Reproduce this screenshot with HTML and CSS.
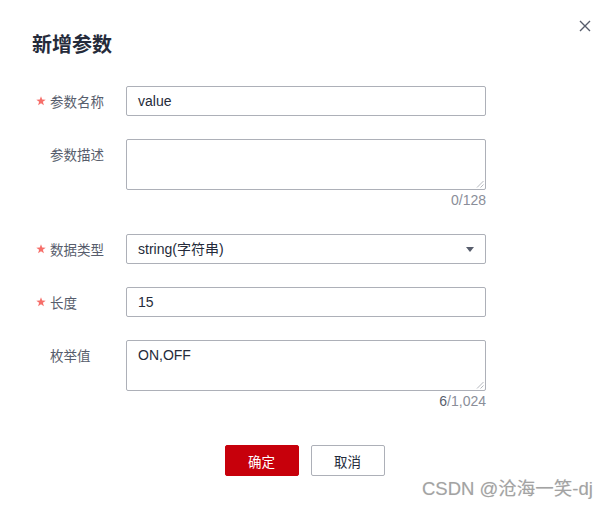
FILE: index.html
```html
<!DOCTYPE html>
<html lang="zh">
<head>
<meta charset="utf-8">
<link rel="stylesheet" href="styles.css">
</head>
<body>
<div class="dialog">
  <button class="close" aria-label="close">
    <svg width="12" height="12" viewBox="0 0 12 12"><path d="M1 1 L11 11 M11 1 L1 11" stroke="#575d6c" stroke-width="1.4" fill="none"/></svg>
  </button>
  <h1 class="title">新增参数</h1>
  <form class="form">
    <div class="item">
      <label class="label"><span class="star"><svg width="10" height="10" viewBox="0 0 10 10"><path d="M5 0.3 L6.2 3.6 L9.7 3.7 L6.9 5.8 L7.9 9.3 L5 7.2 L2.1 9.3 L3.1 5.8 L0.3 3.7 L3.8 3.6 Z" fill="#f66f6a"/></svg></span>参数名称</label>
      <div class="control"><div class="input">value</div></div>
    </div>
    <div class="item">
      <label class="label"><span class="star"></span>参数描述</label>
      <div class="control">
        <div class="ta-wrap">
          <textarea class="textarea"></textarea>
          <svg class="grip" width="8" height="8" viewBox="0 0 8 8"><path d="M7.5 1 L1 7.5 M7.5 4.5 L4.5 7.5" stroke="#b5b8be" stroke-width="1" fill="none"/></svg>
        </div>
        <div class="count">0/128</div>
      </div>
    </div>
    <div class="item">
      <label class="label"><span class="star"><svg width="10" height="10" viewBox="0 0 10 10"><path d="M5 0.3 L6.2 3.6 L9.7 3.7 L6.9 5.8 L7.9 9.3 L5 7.2 L2.1 9.3 L3.1 5.8 L0.3 3.7 L3.8 3.6 Z" fill="#f66f6a"/></svg></span>数据类型</label>
      <div class="control"><div class="input select">string(字符串)<span class="caret"></span></div></div>
    </div>
    <div class="item">
      <label class="label"><span class="star"><svg width="10" height="10" viewBox="0 0 10 10"><path d="M5 0.3 L6.2 3.6 L9.7 3.7 L6.9 5.8 L7.9 9.3 L5 7.2 L2.1 9.3 L3.1 5.8 L0.3 3.7 L3.8 3.6 Z" fill="#f66f6a"/></svg></span>长度</label>
      <div class="control"><div class="input">15</div></div>
    </div>
    <div class="item">
      <label class="label"><span class="star"></span>枚举值</label>
      <div class="control">
        <div class="ta-wrap">
          <textarea class="textarea">ON,OFF</textarea>
          <svg class="grip" width="8" height="8" viewBox="0 0 8 8"><path d="M7.5 1 L1 7.5 M7.5 4.5 L4.5 7.5" stroke="#b5b8be" stroke-width="1" fill="none"/></svg>
        </div>
        <div class="count"><span class="cur">6</span>/1,024</div>
      </div>
    </div>
    <div class="actions">
      <button type="button" class="btn primary">确定</button>
      <button type="button" class="btn">取消</button>
    </div>
  </form>
  <div class="watermark">CSDN @沧海一笑-dj</div>
</div>
</body>
</html>
```

FILE: styles.css
```css
html, body {
  margin: 0;
  padding: 0;
  background: #fff;
}
body {
  font-family: "Liberation Sans", "Noto Sans CJK SC", sans-serif;
  color: #252b3a;
  width: 608px;
  height: 510px;
  overflow: hidden;
}
.dialog {
  position: relative;
  width: 608px;
  height: 510px;
  box-sizing: border-box;
  padding: 30px 0 0 0;
}
.close {
  position: absolute;
  top: 19px;
  left: 578px;
  width: 14px;
  height: 14px;
  padding: 1px;
  border: 0;
  background: none;
  display: flex;
}
.title {
  margin: 0 0 0 32px;
  font-size: 20px;
  line-height: 28px;
  font-weight: bold;
  color: #252b3a;
  font-family: "Noto Sans CJK SC", sans-serif;
}
.form {
  margin-top: 28px;
}
.item {
  display: flex;
  margin-bottom: 23px;
}
.label {
  width: 90px;
  padding-left: 36px;
  display: flex;
  align-items: flex-start;
  font-family: "Noto Sans CJK SC", sans-serif;
  font-size: 13.5px;
  line-height: 30px;
  color: #575d6c;
  flex-shrink: 0;
}
.star {
  width: 14px;
  height: 30px;
  display: flex;
  align-items: center;
  flex-shrink: 0;
}
.star svg {
  display: block;
}
.control {
  width: 360px;
}
.input {
  position: relative;
  height: 30px;
  box-sizing: border-box;
  border: 1px solid #adb0b8;
  border-radius: 2px;
  padding: 0 11px;
  font-size: 14px;
  line-height: 28px;
  color: #252b3a;
}
.select {
  font-family: "Liberation Sans", "Noto Sans CJK SC", sans-serif;
}
.caret {
  position: absolute;
  right: 11px;
  top: 12px;
  width: 0;
  height: 0;
  border-left: 4px solid transparent;
  border-right: 4px solid transparent;
  border-top: 5px solid #575d6c;
}
.ta-wrap {
  position: relative;
}
.grip {
  position: absolute;
  right: 2px;
  bottom: 2px;
}
.textarea {
  display: block;
  width: 360px;
  height: 51px;
  box-sizing: border-box;
  border: 1px solid #adb0b8;
  border-radius: 2px;
  padding: 4px 11px;
  font-family: "Liberation Sans", sans-serif;
  font-size: 14px;
  line-height: 20px;
  color: #252b3a;
  resize: none;
  margin: 0;
  outline: none;
}
.count {
  text-align: right;
  font-size: 14px;
  line-height: 20px;
  color: #8a8e99;
  margin-bottom: 1px;
}
.count .cur {
  color: #575d6c;
}
.actions {
  display: flex;
  justify-content: center;
  gap: 12px;
  margin-top: 33px;
  padding-left: 1px;
}
.btn {
  width: 74px;
  height: 31px;
  box-sizing: border-box;
  border: 1px solid #adb0b8;
  border-radius: 2px;
  background: #fff;
  color: #252b3a;
  font-family: "Noto Sans CJK SC", sans-serif;
  font-size: 13.5px;
  padding: 0;
}
.btn.primary {
  background: #c7000b;
  border-color: #c7000b;
  color: #fff;
}
.watermark {
  position: absolute;
  left: 422px;
  top: 478px;
  font-family: "Liberation Sans", "Noto Sans CJK SC", sans-serif;
  font-size: 18.5px;
  line-height: 22px;
  color: #a3a3a3;
  text-shadow: 0 0 1px #e0e0e0;
}
```
